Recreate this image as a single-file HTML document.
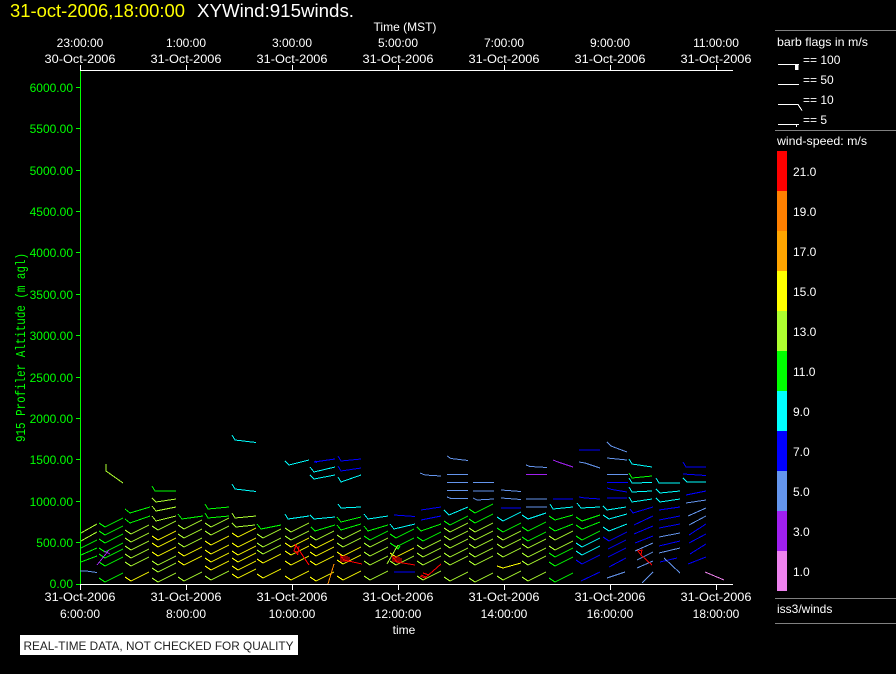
<!DOCTYPE html>
<html><head><meta charset="utf-8"><style>
html,body{margin:0;padding:0;background:#000;width:896px;height:674px;overflow:hidden}
svg{display:block}
text{font-family:"Liberation Sans",sans-serif;font-size:12px;fill:#fff}
.m{text-anchor:middle}.e{text-anchor:end;fill:#0f0}
.b path,path{fill:none;stroke-width:1}
.b{shape-rendering:crispEdges}
.G{stroke:#0f0}.L{stroke:#adff2f}.Y{stroke:#ff0}.C{stroke:#0ff}.B{stroke:#00f}.S{stroke:#6495ed}.P{stroke:#a020f0}.K{stroke:#ee82ee}.R{stroke:#f00}.O{stroke:#ff8c00}
</style></head><body>
<svg width="896" height="674" viewBox="0 0 896 674" xmlns="http://www.w3.org/2000/svg">
<rect width="896" height="674" fill="#000"/>
<text x="10" y="17" textLength="175" lengthAdjust="spacingAndGlyphs" style="font-size:18px;fill:#ff0">31-oct-2006,18:00:00</text>
<text x="197" y="17" textLength="157" lengthAdjust="spacingAndGlyphs" style="font-size:18px">XYWind:915winds.</text>
<text x="405" y="31" class="m">Time (MST)</text>
<g>
<text x="80" y="47" class="m">23:00:00</text><text x="44.500" y="63" textLength="71" lengthAdjust="spacingAndGlyphs">30-Oct-2006</text>
<text x="186" y="47" class="m">1:00:00</text><text x="150.500" y="63" textLength="71" lengthAdjust="spacingAndGlyphs">31-Oct-2006</text>
<text x="292" y="47" class="m">3:00:00</text><text x="256.500" y="63" textLength="71" lengthAdjust="spacingAndGlyphs">31-Oct-2006</text>
<text x="398" y="47" class="m">5:00:00</text><text x="362.500" y="63" textLength="71" lengthAdjust="spacingAndGlyphs">31-Oct-2006</text>
<text x="504" y="47" class="m">7:00:00</text><text x="468.500" y="63" textLength="71" lengthAdjust="spacingAndGlyphs">31-Oct-2006</text>
<text x="610" y="47" class="m">9:00:00</text><text x="574.500" y="63" textLength="71" lengthAdjust="spacingAndGlyphs">31-Oct-2006</text>
<text x="716" y="47" class="m">11:00:00</text><text x="680.500" y="63" textLength="71" lengthAdjust="spacingAndGlyphs">31-Oct-2006</text>
<text x="44.500" y="601" textLength="71" lengthAdjust="spacingAndGlyphs">31-Oct-2006</text><text x="80" y="618" class="m">6:00:00</text>
<text x="150.500" y="601" textLength="71" lengthAdjust="spacingAndGlyphs">31-Oct-2006</text><text x="186" y="618" class="m">8:00:00</text>
<text x="256.500" y="601" textLength="71" lengthAdjust="spacingAndGlyphs">31-Oct-2006</text><text x="292" y="618" class="m">10:00:00</text>
<text x="362.500" y="601" textLength="71" lengthAdjust="spacingAndGlyphs">31-Oct-2006</text><text x="398" y="618" class="m">12:00:00</text>
<text x="468.500" y="601" textLength="71" lengthAdjust="spacingAndGlyphs">31-Oct-2006</text><text x="504" y="618" class="m">14:00:00</text>
<text x="574.500" y="601" textLength="71" lengthAdjust="spacingAndGlyphs">31-Oct-2006</text><text x="610" y="618" class="m">16:00:00</text>
<text x="680.500" y="601" textLength="71" lengthAdjust="spacingAndGlyphs">31-Oct-2006</text><text x="716" y="618" class="m">18:00:00</text>
</g>
<text x="404" y="634" class="m">time</text>
<g class="e-g">
<text x="73" y="92" class="e">6000.00</text><text x="73" y="133" class="e">5500.00</text><text x="73" y="175" class="e">5000.00</text><text x="73" y="216" class="e">4500.00</text><text x="73" y="257" class="e">4000.00</text><text x="73" y="299" class="e">3500.00</text><text x="73" y="340" class="e">3000.00</text><text x="73" y="382" class="e">2500.00</text><text x="73" y="423" class="e">2000.00</text><text x="73" y="464" class="e">1500.00</text><text x="73" y="506" class="e">1000.00</text><text x="73" y="547" class="e">500.00</text><text x="73" y="588" class="e">0.00</text>
</g>
<text transform="translate(25 442) rotate(-90)" textLength="189" lengthAdjust="spacingAndGlyphs" style="font-family:'Liberation Mono',monospace;font-size:14px;fill:#0f0">915 Profiler Altitude (m agl)</text>
<g class="b">
<path stroke="#0f0" d="M80.5 70V585M76 87.5h4M76 128.5h4M76 170.5h4M76 211.5h4M76 252.5h4M76 294.5h4M76 335.5h4M76 377.5h4M76 418.5h4M76 459.5h4M76 501.5h4M76 542.5h4M76 584.5h4"/>
<path stroke="#fff" d="M80 70.5H733M80 584.5H733M80.5 65v5M186.5 65v5M292.5 65v5M398.5 65v5M504.5 65v5M610.5 65v5M716.5 65v5M80.5 585v5M186.5 585v5M292.5 585v5M398.5 585v5M504.5 585v5M610.5 585v5M716.5 585v5"/>
<path stroke="#808080" d="M775 30.5H896M775 130.5H896M775 598.5H896M775 623.5H896"/>
<!-- col0 -->
<path class="L" d="M81 533l16 -9M81 541l16 -9"/>
<path class="G" d="M81 548l16 -8M81 555l16 -7M81 562l16 -6"/>
<path class="S" d="M80 571h6l11 1.500"/>
<path class="L" d="M106 464v7l17 12"/>
<!-- col1 -->
<path class="G" d="M99 523l6 4 18 -9M99 531l6 4 18 -9M99 539l6 4 18 -9M99 548l6 4 18 -9M99 554l6 4 18 -9M99 562l6 4 18 -9M99 578l6 4 18 -9"/>
<path class="P" d="M97 565l12 -15M104 551l6 3"/>
<!-- col2 -->
<path class="G" d="M125 509l5 4 20 -6M125 519l5 4 20 -7"/>
<path class="L" d="M125 530l6 4 18 -9M125 538l6 4 18 -9M125 546l6 4 18 -9M125 554l6 4 18 -9M125 562l6 4 18 -9"/>
<path class="Y" d="M125 577l6 4 18 -9"/>
<!-- col3 -->
<path class="G" d="M152 486l3 5h21"/>
<path class="L" d="M152 498l4 4 20 -3M152 506l4 5 20 -4M152 516l4 5 20 -5M152 526l6 4 18 -9M152 561l6 4 18 -9M152 568l6 4 18 -9M152 578l6 4 18 -9"/>
<path class="Y" d="M152 536l6 4 18 -9M152 543l6 4 18 -9M152 552l6 4 18 -9"/>
<!-- col4 -->
<path class="G" d="M178 514l4 5 21 -3"/>
<path class="L" d="M178 525l6 4 18 -9M178 534l6 4 18 -9M178 543l6 4 18 -9M178 577l6 4 18 -9"/>
<path class="Y" d="M178 552l6 4 18 -9M178 561l6 4 18 -9"/>
<!-- col5 -->
<path class="G" d="M205 504l3 5 21 -2M205 513l3 5 21 -2"/>
<path class="L" d="M205 523l6 4 18 -9M205 531l6 4 18 -9M205 576l6 4 18 -9"/>
<path class="Y" d="M205 541l6 4 18 -9M205 550l6 4 18 -9M205 558l6 4 18 -9M205 566l6 4 18 -9"/>
<!-- col6 -->
<path class="C" d="M232 435l3 5 21 2.500M232 484l3 5 21 2.500"/>
<path class="L" d="M232 513l3 5 21 -2M232 523l4 4 19 -2"/>
<path class="Y" d="M232 533l6 4 18 -9M232 543l6 4 18 -9M232 551l6 4 18 -9M232 558l6 4 18 -9M232 566l6 4 18 -9M232 574l6 4 18 -9"/>
<!-- col7 -->
<path class="G" d="M257 524l4 5 20 -4"/>
<path class="L" d="M257 534l6 4 18 -9M257 543l6 4 18 -9M257 550l6 4 18 -9"/>
<path class="Y" d="M257 559l6 4 18 -9M257 574l6 4 18 -9"/>
<!-- col8 -->
<path class="C" d="M285 461l4 4 20 -5M285 514l3 5 21 -3"/>
<path class="L" d="M285 528l6 4 18 -9M285 536l6 4 18 -9"/>
<path class="Y" d="M285 543l6 4 18 -9M285 551l6 4 18 -9M285 561l6 4 18 -9M285 576l6 4 18 -9"/>
<path class="R" d="M295 544l14 21M296 545l-2 6 4 2 1 -7M295 551l3 4"/>
<!-- col9 -->
<path class="B" d="M314 462l21 -3M315 461l2 2"/>
<path class="C" d="M310 467l4 5 21 -5M310 475l4 4 21 -4M310 515l4 4 21 -2"/>
<path class="G" d="M311 527l4 4 20 -6"/>
<path class="L" d="M310 536l6 4 18 -9"/>
<path class="Y" d="M310 544l6 4 18 -9M310 552l6 4 18 -9M310 561l6 4 18 -9M310 577l6 4 18 -9"/>
<path class="O" d="M328 584l6 -20"/>
<!-- col10 -->
<path class="B" d="M338 456l3 5 20 -2M338 466l3 5 20 -3"/>
<path class="C" d="M338 477l3 5 20 -7M338 504l3 4 20 -1"/>
<path class="G" d="M337 517l4 5 20 -5M337 525l4 5 20 -6"/>
<path class="L" d="M337 535l6 4 18 -9M337 543l6 4 18 -9"/>
<path class="Y" d="M337 552l6 4 18 -9M337 560l6 4 18 -9M337 576l6 4 18 -9"/>
<path class="R" d="M340 555l4 5 18 4M341 556v6M343 556v6M345 555v7M347 556v6M349 557v5"/>
<!-- col11 -->
<path class="C" d="M364 514l4 5 20 -3"/>
<path class="G" d="M364 526l4 5 20 -6M364 536l6 4 18 -9"/>
<path class="L" d="M364 543l6 4 18 -9M364 552l6 4 18 -9M364 561l6 4 18 -9M364 576l6 4 18 -9"/>
<!-- col12 -->
<path class="B" d="M394 515l21 1.500M394 572h21"/>
<path class="C" d="M390 524l4 5 21 -5"/>
<path class="G" d="M390 534l6 4 18 -9M390 543l6 4 18 -9M395 546l3 3 2 -3"/>
<path class="Y" d="M390 553l6 4 18 -9"/>
<path class="L" d="M390 561l6 4 18 -9M387 564l11 -19"/>
<path class="R" d="M392 556l5 6 18 3M393 556v6M395 556v6M397 556v7M399 557v6M401 558v5"/>
<!-- col13 -->
<path class="S" d="M420 473l5 2 16 1"/>
<path class="B" d="M421 510l20 -3M421 520l20 -4"/>
<path class="G" d="M417 527l4 4 20 -7M417 537l6 4 18 -9"/>
<path class="L" d="M417 545l6 4 18 -9M417 553l6 4 18 -9M417 561l6 4 18 -9M417 576l6 4 18 -9"/>
<path class="R" d="M420 576l5 2 16 -14M421 575l5 2M423 573l6 2"/>
<!-- col14 -->
<path class="S" d="M447 456l4 2.500 17 2M447 474.500h21M447 482.500h21M447 490.500h21M447 497l4 1.500h17"/>
<path class="C" d="M444 510l5 5 19 -8"/>
<path class="G" d="M444 521l6 4 18 -9"/>
<path class="L" d="M444 528l6 4 18 -9M444 536l6 4 18 -9M444 544l6 4 18 -9M444 553l6 4 18 -9M444 561l6 4 18 -9M444 577l6 4 18 -9"/>
<!-- col15 -->
<path class="S" d="M473 482.500h21M473 491h21M473 498l4 2 17 -1"/>
<path class="G" d="M469 509l6 4 18 -9M469 519l6 4 18 -9"/>
<path class="L" d="M469 528l6 4 18 -9M469 536l6 4 18 -9M469 544l6 4 18 -9M469 553l6 4 18 -9M469 561l6 4 18 -9M469 578l6 4 18 -9"/>
<!-- col16 -->
<path class="S" d="M501 490l20 1.500M501 498l20 1.500"/>
<path class="B" d="M501 508h20"/>
<path class="C" d="M497 517l6 4 18 -9"/>
<path class="G" d="M497 528l6 4 18 -9"/>
<path class="L" d="M497 536l6 4 18 -9M497 544l6 4 18 -9M497 553l6 4 18 -9M497 576l6 4 18 -9"/>
<path class="Y" d="M497 566l6 2 18 -5"/>
<!-- col17 -->
<path class="S" d="M526 465l4 1.500 17 1M526 499h21M526 507h21"/>
<path class="P" d="M526 474.500h21"/>
<path class="C" d="M522 515l6 4 18 -6"/>
<path class="G" d="M522 527l6 4 18 -9M522 537l6 4 18 -9"/>
<path class="L" d="M522 544l6 4 18 -9M522 553l6 4 18 -9M522 561l6 4 18 -9M522 577l6 4 18 -9"/>
<!-- col18 -->
<path class="P" d="M553 460l5 2 15 5"/>
<path class="B" d="M553 499h20"/>
<path class="C" d="M550 504l3 5 20 -2"/>
<path class="G" d="M549 516l6 4 18 -5M549 527l6 4 18 -7M549 553l6 4 18 -9M549 562l6 4 18 -9M549 578l6 4 18 -9"/>
<path class="L" d="M549 536l6 4 18 -9M549 546l6 4 18 -9"/>
<!-- col19 -->
<path class="B" d="M579 450h21M579 497l6 1 15 1M581 581l19 -9M576 560l6 4 18 -9"/>
<path class="S" d="M579 462l6 1 15 5"/>
<path class="C" d="M577 503l4 5 19 -1M576 543l6 4 18 -9M576 551l6 4 18 -9"/>
<path class="G" d="M576 517l6 4 18 -6M576 525l6 4 18 -7M576 536l6 4 18 -9"/>
<!-- col20 -->
<path class="S" d="M607 442l4 4 16 6M607 458l20 2M607 474.500h21M607 578l18 -6"/>
<path class="B" d="M607 482.500h21M607 488l5 1.500 15 2.500M607 498h20M603 537l6 4 18 -9M608 549l18 -9M608 557l18 -9M609 567l17 -9"/>
<path class="C" d="M603 506l4 4 19 -3M603 515l6 4 18 -5M603 527l6 4 18 -7"/>
<!-- col21 -->
<path class="C" d="M629 459l3 5 20 3M629 478l3 5 20 -.5M629 487l3 5 20 -1M629 497l3 5 20 -3"/>
<path class="G" d="M629 473l3 5 20 -2"/>
<path class="B" d="M630 509l3 4 20 -6M634 525l19 -9M634 534l19 -8M635 543l18 -7"/>
<path class="S" d="M635 551l18 -8M637 560l16 -8M637 568l16 -7M642 583l11 -11"/>
<path class="R" d="M638 551l3 4 11 10M638 551l4 -1 -1 5z"/>
<!-- col22 -->
<path class="C" d="M656 478l3 5h21M656 489l4 4 20 -2M656 498l4 4 20 -3"/>
<path class="B" d="M659 510l21 -3M659 520l21 -4M659 528l21 -4M659 546l21 -5M660 562l17 -4"/>
<path class="S" d="M659 537l21 -4M659 553l21 -5M664 558l16 15"/>
<!-- col23 -->
<path class="B" d="M683 462l3 5h20M683 474l23 1.500M686 495l20 -4M689 535l17 -11M689 543l17 -9M690 554l16 -10M688 564l18 -7"/>
<path class="C" d="M683 478l4 4h19"/>
<path class="S" d="M686 503l20 -3M688 516l18 -8M689 525l17 -9"/>
<path class="K" d="M705 572l19 8"/>
</g>
<!-- legend -->
<text x="777" y="46" textLength="91" lengthAdjust="spacingAndGlyphs">barb flags in m/s</text>
<text x="803" y="64">== 100</text><text x="803" y="84">== 50</text><text x="803" y="104">== 10</text><text x="803" y="124">== 5</text>
<g class="b">
<path stroke="#fff" d="M778 64.500h21M778 84.500h21M778 104.500h20l4 6M778 124.500h21M796.500 124v3"/>
<rect x="795" y="64" width="3.500" height="6" fill="#fff"/>
<path d="M795 85h4v5h-2z" fill="#fff"/>
</g>
<text x="777" y="145" textLength="90" lengthAdjust="spacingAndGlyphs">wind-speed: m/s</text>
<g shape-rendering="crispEdges">
<rect x="777" y="151" width="10" height="40" fill="#f00"/>
<rect x="777" y="191" width="10" height="40" fill="#ff8000"/>
<rect x="777" y="231" width="10" height="40" fill="#ffa500"/>
<rect x="777" y="271" width="10" height="40" fill="#ff0"/>
<rect x="777" y="311" width="10" height="40" fill="#adff2f"/>
<rect x="777" y="351" width="10" height="40" fill="#0f0"/>
<rect x="777" y="391" width="10" height="40" fill="#0ff"/>
<rect x="777" y="431" width="10" height="40" fill="#00f"/>
<rect x="777" y="471" width="10" height="40" fill="#6495ed"/>
<rect x="777" y="511" width="10" height="40" fill="#a020f0"/>
<rect x="777" y="551" width="10" height="40" fill="#ee82ee"/>
</g>
<text x="793" y="176">21.0</text><text x="793" y="216">19.0</text><text x="793" y="256">17.0</text><text x="793" y="296">15.0</text><text x="793" y="336">13.0</text><text x="793" y="376">11.0</text><text x="793" y="416">9.0</text><text x="793" y="456">7.0</text><text x="793" y="496">5.0</text><text x="793" y="536">3.0</text><text x="793" y="576">1.0</text>
<text x="777" y="613">iss3/winds</text>
<rect x="20" y="635" width="278" height="20" fill="#fff"/>
<text x="23.500" y="650" textLength="270" lengthAdjust="spacingAndGlyphs" style="font-size:11.500px;fill:#222">REAL-TIME DATA, NOT CHECKED FOR QUALITY</text>
</svg>
</body></html>
